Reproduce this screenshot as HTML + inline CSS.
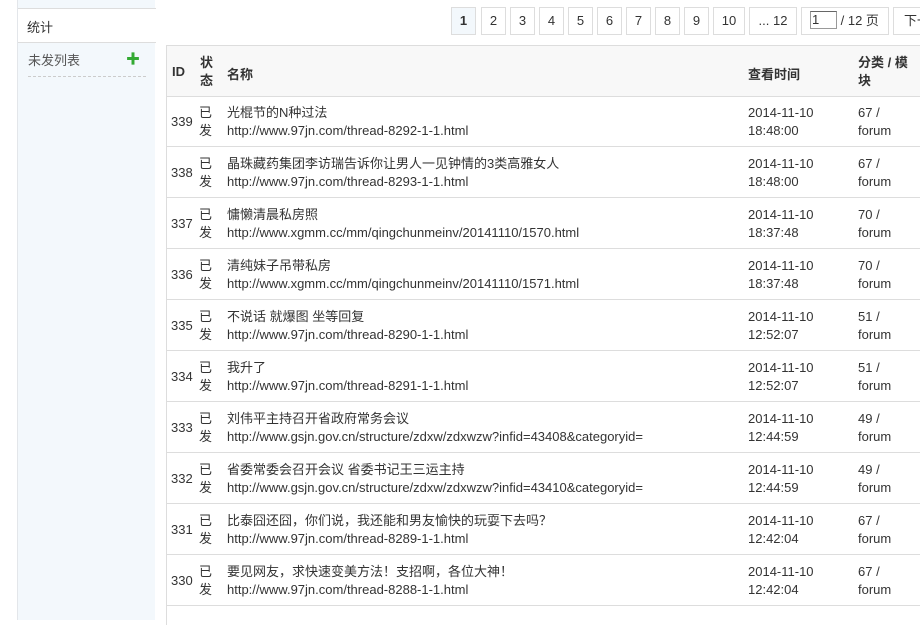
<!DOCTYPE html>
<html><head><meta charset="utf-8"><style>
*{margin:0;padding:0;box-sizing:border-box}
body{width:920px;height:620px;overflow:hidden;background:#fff;font-family:"Liberation Sans","Noto Sans CJK SC",sans-serif;font-size:13px;color:#333;position:relative}
.side{position:absolute;left:17px;top:0;width:138px;height:620px;background:#f3f8fc;border-left:1px solid #e3e6ea}
.s1{position:absolute;left:0;top:8px;width:138px;height:35px;background:#fff;border-top:1px solid #ddd;border-bottom:1px solid #ddd;padding:8px 9px;font-size:13px;color:#333}
.s2{position:absolute;left:10px;top:50px;width:118px;height:27px;border-bottom:1px dashed #ccc;font-size:13px;color:#555}
.plus{position:absolute;left:98px;top:2px;color:#3a3;font-weight:bold;font-size:14px;line-height:14px}
.pg{position:absolute;top:7px;height:28px;border:1px solid #ddd;text-align:center;line-height:26px;font-size:13px;color:#333;background:#fff}
.tbl{position:absolute;left:166px;top:45px;width:760px;height:580px;border-left:1px solid #ddd;border-top:1px solid #ddd}
.hd{position:absolute;left:0;top:0;width:760px;height:51px;background:#f8f8f8;border-bottom:1px solid #ddd;font-weight:bold}
.r{position:absolute;left:0;width:760px;height:51px;border-bottom:1px solid #ddd;line-height:18px}
.c{position:absolute}
</style></head><body>
<div class="side">
<div class="s1">统计</div>
<div class="s2">未发列表<span class="plus">✚</span></div>
</div>
<div class="pg" style="left:451px;width:25px;background:#f3f8fc;font-weight:bold">1</div>
<div class="pg" style="left:481px;width:25px">2</div>
<div class="pg" style="left:510px;width:25px">3</div>
<div class="pg" style="left:539px;width:25px">4</div>
<div class="pg" style="left:568px;width:25px">5</div>
<div class="pg" style="left:597px;width:25px">6</div>
<div class="pg" style="left:626px;width:25px">7</div>
<div class="pg" style="left:655px;width:25px">8</div>
<div class="pg" style="left:684px;width:25px">9</div>
<div class="pg" style="left:713px;width:32px">10</div>
<div class="pg" style="left:749px;width:48px">... 12</div>
<div class="pg" style="left:801px;width:88px;text-align:left;padding-left:8px"><span style="display:inline-block;width:27px;height:18px;border:1px solid #999;border-top-color:#666;vertical-align:middle;line-height:16px;padding-left:1px;margin-top:-3px">1</span> / 12 页</div>
<div class="pg" style="left:893px;width:40px;text-align:left;padding-left:10px">下一</div>
<div class="tbl">
<div class="hd">
<div class="c" style="left:5px;top:18px">ID</div>
<div class="c" style="left:33px;top:8px;line-height:18px">状<br>态</div>
<div class="c" style="left:60px;top:18px">名称</div>
<div class="c" style="left:581px;top:18px">查看时间</div>
<div class="c" style="left:691px;top:8px;line-height:18px">分类 / 模<br>块</div>
</div>
</div>
<div style="position:absolute;left:166px;top:0">
<div class="r" style="top:96px"><div class="c" style="left:5px;top:17px">339</div><div class="c" style="left:33px;top:8px">已<br>发</div><div class="c" style="left:61px;top:8px">光棍节的N种过法<br>http://www.97jn.com/thread-8292-1-1.html</div><div class="c" style="left:582px;top:8px">2014-11-10<br>18:48:00</div><div class="c" style="left:692px;top:8px">67 /<br>forum</div></div>
<div class="r" style="top:147px"><div class="c" style="left:5px;top:17px">338</div><div class="c" style="left:33px;top:8px">已<br>发</div><div class="c" style="left:61px;top:8px">晶珠藏药集团李访瑞告诉你让男人一见钟情的3类高雅女人<br>http://www.97jn.com/thread-8293-1-1.html</div><div class="c" style="left:582px;top:8px">2014-11-10<br>18:48:00</div><div class="c" style="left:692px;top:8px">67 /<br>forum</div></div>
<div class="r" style="top:198px"><div class="c" style="left:5px;top:17px">337</div><div class="c" style="left:33px;top:8px">已<br>发</div><div class="c" style="left:61px;top:8px">慵懒清晨私房照<br>http://www.xgmm.cc/mm/qingchunmeinv/20141110/1570.html</div><div class="c" style="left:582px;top:8px">2014-11-10<br>18:37:48</div><div class="c" style="left:692px;top:8px">70 /<br>forum</div></div>
<div class="r" style="top:249px"><div class="c" style="left:5px;top:17px">336</div><div class="c" style="left:33px;top:8px">已<br>发</div><div class="c" style="left:61px;top:8px">清纯妹子吊带私房<br>http://www.xgmm.cc/mm/qingchunmeinv/20141110/1571.html</div><div class="c" style="left:582px;top:8px">2014-11-10<br>18:37:48</div><div class="c" style="left:692px;top:8px">70 /<br>forum</div></div>
<div class="r" style="top:300px"><div class="c" style="left:5px;top:17px">335</div><div class="c" style="left:33px;top:8px">已<br>发</div><div class="c" style="left:61px;top:8px">不说话 就爆图 坐等回复<br>http://www.97jn.com/thread-8290-1-1.html</div><div class="c" style="left:582px;top:8px">2014-11-10<br>12:52:07</div><div class="c" style="left:692px;top:8px">51 /<br>forum</div></div>
<div class="r" style="top:351px"><div class="c" style="left:5px;top:17px">334</div><div class="c" style="left:33px;top:8px">已<br>发</div><div class="c" style="left:61px;top:8px">我升了<br>http://www.97jn.com/thread-8291-1-1.html</div><div class="c" style="left:582px;top:8px">2014-11-10<br>12:52:07</div><div class="c" style="left:692px;top:8px">51 /<br>forum</div></div>
<div class="r" style="top:402px"><div class="c" style="left:5px;top:17px">333</div><div class="c" style="left:33px;top:8px">已<br>发</div><div class="c" style="left:61px;top:8px">刘伟平主持召开省政府常务会议<br>http://www.gsjn.gov.cn/structure/zdxw/zdxwzw?infid=43408&amp;categoryid=</div><div class="c" style="left:582px;top:8px">2014-11-10<br>12:44:59</div><div class="c" style="left:692px;top:8px">49 /<br>forum</div></div>
<div class="r" style="top:453px"><div class="c" style="left:5px;top:17px">332</div><div class="c" style="left:33px;top:8px">已<br>发</div><div class="c" style="left:61px;top:8px">省委常委会召开会议 省委书记王三运主持<br>http://www.gsjn.gov.cn/structure/zdxw/zdxwzw?infid=43410&amp;categoryid=</div><div class="c" style="left:582px;top:8px">2014-11-10<br>12:44:59</div><div class="c" style="left:692px;top:8px">49 /<br>forum</div></div>
<div class="r" style="top:504px"><div class="c" style="left:5px;top:17px">331</div><div class="c" style="left:33px;top:8px">已<br>发</div><div class="c" style="left:61px;top:8px">比泰囧还囧，你们说，我还能和男友愉快的玩耍下去吗？<br>http://www.97jn.com/thread-8289-1-1.html</div><div class="c" style="left:582px;top:8px">2014-11-10<br>12:42:04</div><div class="c" style="left:692px;top:8px">67 /<br>forum</div></div>
<div class="r" style="top:555px"><div class="c" style="left:5px;top:17px">330</div><div class="c" style="left:33px;top:8px">已<br>发</div><div class="c" style="left:61px;top:8px">要见网友，求快速变美方法！支招啊，各位大神！<br>http://www.97jn.com/thread-8288-1-1.html</div><div class="c" style="left:582px;top:8px">2014-11-10<br>12:42:04</div><div class="c" style="left:692px;top:8px">67 /<br>forum</div></div>
</div>
</body></html>
